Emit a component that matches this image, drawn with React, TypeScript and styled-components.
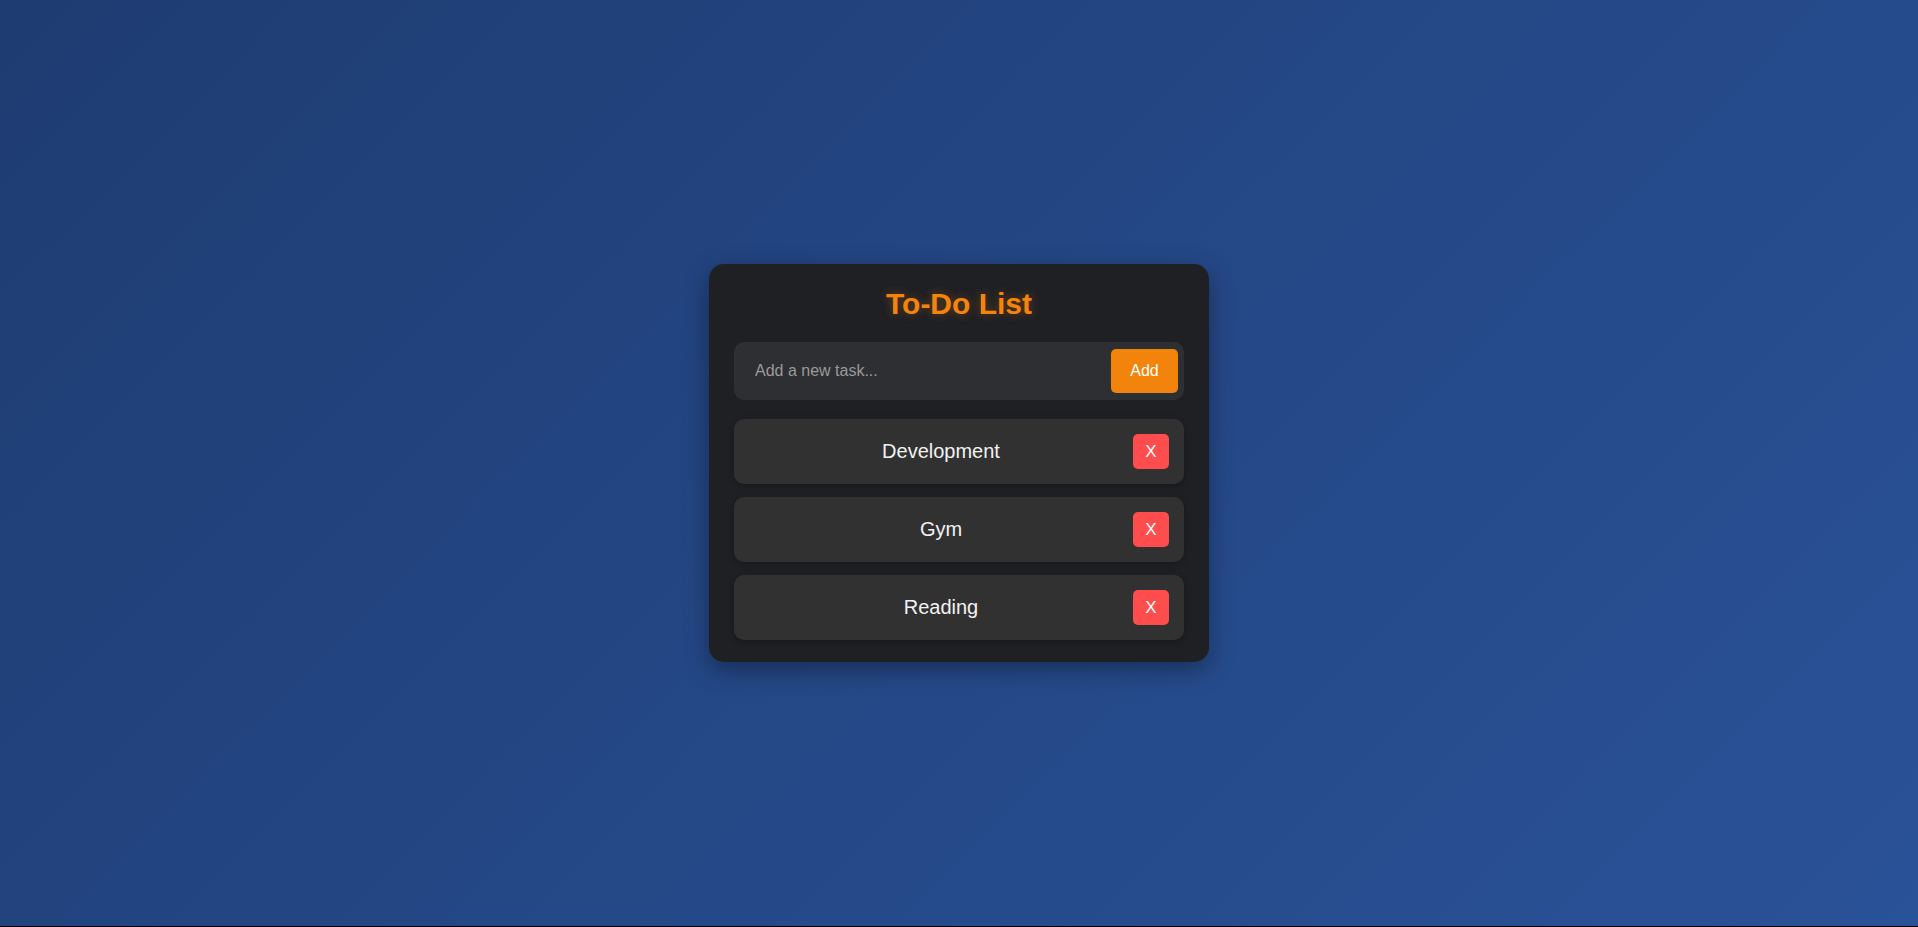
import styled, { createGlobalStyle } from "styled-components";

const GlobalStyle = createGlobalStyle`
  html, body {
    margin: 0;
    padding: 0;
    background: #000;
  }
  body {
    font-family: "Liberation Sans", Arial, sans-serif;
  }
`;

const Page = styled.div`
  display: flex;
  align-items: center;
  justify-content: center;
  height: calc(100vh - 1px);
  background: linear-gradient(135deg, #1e3c72, #2a5298);
`;

const Card = styled.div`
  display: flex;
  flex-direction: column;
  width: 500px;
  box-sizing: border-box;
  padding: 22px 25px 22px;
  background: #1f2024;
  border-radius: 15px;
  box-shadow: 0 8px 24px rgba(0, 0, 0, 0.35);
`;

const Title = styled.h1`
  margin: 0 0 20px;
  text-align: center;
  font-size: 30px;
  line-height: 36px;
  font-weight: bold;
  color: #f5840c;
  text-shadow: 0 0 10px rgba(245, 132, 12, 0.35);
`;

const InputRow = styled.div`
  display: flex;
  align-items: center;
  height: 58px;
  box-sizing: border-box;
  padding: 0 6px 0 19px;
  background: #2e2f32;
  border-radius: 10px;
  margin-bottom: 19px;
`;

const TaskInput = styled.input`
  flex: 1;
  min-width: 0;
  border: none;
  outline: none;
  background: transparent;
  font-family: "Liberation Sans", Arial, sans-serif;
  font-size: 16px;
  color: #eee;

  &::placeholder {
    color: #9a9a9a;
  }
`;

const AddButton = styled.button`
  width: 67px;
  height: 44px;
  border: none;
  border-radius: 5px;
  background: #f2840c;
  color: #fff;
  font-family: "Liberation Sans", Arial, sans-serif;
  font-size: 16px;
  font-weight: 500;
  cursor: pointer;
`;

const TaskList = styled.ul`
  display: flex;
  flex-direction: column;
  gap: 13px;
  margin: 0;
  padding: 0;
  list-style: none;
`;

const TaskItem = styled.li`
  display: flex;
  align-items: center;
  height: 65px;
  box-sizing: border-box;
  padding: 0 15px;
  background: #313131;
  border-radius: 10px;
  box-shadow: 0 2px 6px rgba(0, 0, 0, 0.25);
`;

const TaskText = styled.span`
  flex: 1;
  text-align: center;
  font-size: 20px;
  color: #f2f2f2;
`;

const DeleteButton = styled.button`
  width: 36px;
  height: 35px;
  border: none;
  border-radius: 5px;
  background: #ff4d4d;
  color: #fff;
  font-family: "Liberation Sans", Arial, sans-serif;
  font-size: 17px;
  padding: 0;
  cursor: pointer;
`;

const tasks = ["Development", "Gym", "Reading"];

const App = () => (
  <>
    <GlobalStyle />
    <Page>
      <Card>
        <Title>To-Do List</Title>
        <InputRow>
          <TaskInput placeholder="Add a new task..." />
          <AddButton>Add</AddButton>
        </InputRow>
        <TaskList>
          {tasks.map((task) => (
            <TaskItem key={task}>
              <TaskText>{task}</TaskText>
              <DeleteButton>X</DeleteButton>
            </TaskItem>
          ))}
        </TaskList>
      </Card>
    </Page>
  </>
);

export default App;
